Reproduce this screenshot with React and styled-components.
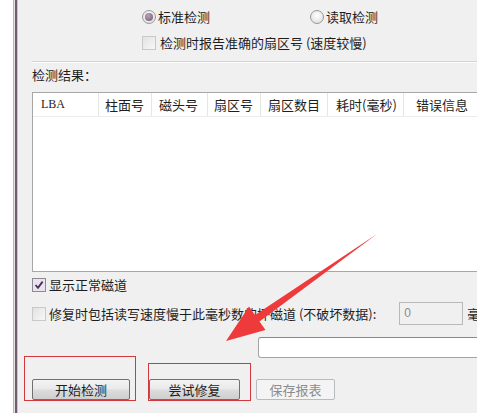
import React from 'react';
import styled, { createGlobalStyle } from 'styled-components';

const GlobalStyle = createGlobalStyle`
  html, body {
    margin: 0;
    padding: 0;
    background: #f0f0f0;
  }
  body {
    font-family: "Noto Sans CJK SC", "Liberation Sans", sans-serif;
    font-size: 13px;
    color: #1e1e1e;
  }
`;

const Page = styled.div`
  position: relative;
  display: flex;
  width: 477px;
  height: 413px;
  overflow: hidden;
  background: #f0f0f0;
`;

// linker Fensterrahmen
const Frame = styled.div`
  flex: 0 0 18px;
  background: linear-gradient(
    to right,
    #ffffff 0 13px,
    #bdb6bb 13px 14px,
    #e8e2e6 14px 15px,
    #6f5d6c 15px 17px,
    #cfc6cc 17px 18px
  );
`;

const Content = styled.div`
  flex: 0 0 540px;
  display: flex;
  flex-direction: column;
  padding-left: 14px;
`;

const OptionBlock = styled.div`
  display: flex;
  flex-direction: column;
  padding-left: 110px;
  margin-top: 9px;
`;

const Row = styled.div`
  display: flex;
  align-items: center;
  height: ${p => p.h || 16}px;
  margin-top: ${p => p.mt || 0}px;
  line-height: 16px;
  white-space: nowrap;
`;

const RadioItem = styled.label`
  display: flex;
  align-items: center;
  width: ${p => p.w || 'auto'};
`;

const Radio = styled.span`
  width: 12px;
  height: 12px;
  border-radius: 50%;
  border: 1px solid #9c979b;
  background: radial-gradient(circle at 50% 40%, #ffffff, #d8d8d8);
  display: flex;
  align-items: center;
  justify-content: center;
  margin-right: 2px;
  &::after {
    content: '';
    display: ${p => (p.checked ? 'block' : 'none')};
    width: 8px;
    height: 8px;
    border-radius: 50%;
    background: radial-gradient(circle at 40% 35%, #baa4b9, #6b546a);
  }
`;

const Check = styled.span`
  flex: 0 0 auto;
  width: 12px;
  height: 12px;
  border: 1px solid ${p => (p.checked ? '#8d8a93' : '#c9c9c9')};
  background: ${p => (p.checked ? '#e9e3ee' : 'linear-gradient(135deg, #e2e2e2, #f7f7f7)')};
  margin-right: ${p => p.mr || 3}px;
  display: flex;
  align-items: center;
  justify-content: center;
`;

const Divider = styled.div`
  height: 1px;
  margin-top: 10px;
  background: #d5d5d5;
  border-bottom: 1px solid #fbfbfb;
`;

const SectionLabel = styled.div`
  margin-top: 4px;
  height: 16px;
  line-height: 16px;
`;

const Table = styled.div`
  margin-top: 9px;
  height: 180px;
  box-sizing: border-box;
  border: 1px solid #a7a7a7;
  background: #ffffff;
`;

const HeaderRow = styled.div`
  display: flex;
  height: 23px;
  border-bottom: 1px solid #ececec;
`;

const HeaderCell = styled.div`
  flex: 0 0 ${p => p.w}px;
  box-sizing: border-box;
  padding-left: ${p => p.pl || 6}px;
  border-right: 1px solid #e6e6e6;
  line-height: 23px;
  white-space: nowrap;
  font-family: ${p => (p.latin ? '"Liberation Serif", serif' : 'inherit')};
  font-size: ${p => (p.latin ? 12 : 13)}px;
`;

const NumInput = styled.div`
  width: 64px;
  height: 23px;
  box-sizing: border-box;
  border: 1px solid #b9b9b9;
  background: #f0f0f0;
  color: #8c8c8c;
  padding-left: 4px;
  line-height: 20px;
  font-family: "Liberation Sans", sans-serif;
  font-size: 12px;
  margin-left: ${p => p.ml}px;
  margin-right: 4px;
`;

const StatusBox = styled.div`
  margin-top: 12px;
  margin-left: 226px;
  height: 21px;
  box-sizing: border-box;
  border: 1px solid #a4a4a4;
  border-top-color: #8a8a8a;
  border-radius: 3px;
  background: #ffffff;
`;

const ButtonRow = styled.div`
  position: relative;
  display: flex;
  margin-top: 21px;
`;

const Button = styled.div`
  width: ${p => p.w}px;
  height: 21px;
  margin-left: ${p => p.ml || 0}px;
  box-sizing: border-box;
  border: 1px solid ${p => (p.disabled ? '#b8bcbf' : '#707070')};
  border-radius: 2px;
  background: ${p =>
    p.disabled
      ? '#f4f4f4'
      : 'linear-gradient(to bottom, #f3f3f3 0%, #e9e9e9 48%, #dcdcdc 52%, #cfcfcf 100%)'};
  color: ${p => (p.disabled ? '#8c8c8c' : '#1e1e1e')};
  display: flex;
  align-items: center;
  justify-content: center;
  line-height: 19px;
`;

// rote Markierungen aus dem Screenshot
const Highlight = styled.div`
  position: absolute;
  left: ${p => p.x}px;
  top: ${p => p.y}px;
  width: ${p => p.w}px;
  height: ${p => p.h}px;
  box-sizing: border-box;
  border: 1px solid #d2393f;
  pointer-events: none;
`;

const Overlay = styled.svg`
  position: absolute;
  left: 0;
  top: 0;
  pointer-events: none;
`;

const columns = [
  { label: 'LBA', w: 66, pl: 8, latin: true },
  { label: '柱面号', w: 53 },
  { label: '磁头号', w: 56, pl: 7 },
  { label: '扇区号', w: 53 },
  { label: '扇区数目', w: 67, pl: 7 },
  { label: '耗时(毫秒)', w: 76, pl: 8 },
  { label: '错误信息', w: 100, pl: 12 },
];

const CheckMark = () => (
  <svg width="10" height="10" viewBox="0 0 10 10">
    <path d="M1.5 5 L4 7.8 L8.6 1.6" fill="none" stroke="#4a2c5c" strokeWidth="1.8" />
  </svg>
);

export default function App() {
  return (
    <>
      <GlobalStyle />
      <Page>
        <Frame />
        <Content>
          <OptionBlock>
            <Row>
              <RadioItem w="168px">
                <Radio checked />
                标准检测
              </RadioItem>
              <RadioItem>
                <Radio />
                读取检测
              </RadioItem>
            </Row>
            <Row mt={10}>
              <Check mr={4} />
              检测时报告准确的扇区号 (速度较慢)
            </Row>
          </OptionBlock>

          <Divider />
          <SectionLabel>检测结果：</SectionLabel>

          <Table>
            <HeaderRow>
              {columns.map(c => (
                <HeaderCell key={c.label} w={c.w} pl={c.pl} latin={c.latin}>
                  {c.label}
                </HeaderCell>
              ))}
            </HeaderRow>
          </Table>

          <Row mt={5}>
            <Check checked>
              <CheckMark />
            </Check>
            显示正常磁道
          </Row>
          <Row mt={9} h={23}>
            <Check />
            修复时包括读写速度慢于此毫秒数的坏磁道 (不破坏数据):
            <NumInput ml={23}>0</NumInput>
            毫秒
          </Row>

          <StatusBox />

          <ButtonRow>
            <Button w={98}>开始检测</Button>
            <Button w={91} ml={19}>尝试修复</Button>
            <Button w={79} ml={16} disabled>保存报表</Button>
            <Highlight x={-8} y={-23} w={112} h={45} />
            <Highlight x={116} y={-16} w={103} h={38} />
          </ButtonRow>
        </Content>

        <Overlay width="477" height="413" viewBox="0 0 477 413">
          <polygon
            points="377,234 259.5,321.5 265.5,330 226,341 249,306.5 255,315"
            fill="#ef3a3c"
          />
        </Overlay>
      </Page>
    </>
  );
}
